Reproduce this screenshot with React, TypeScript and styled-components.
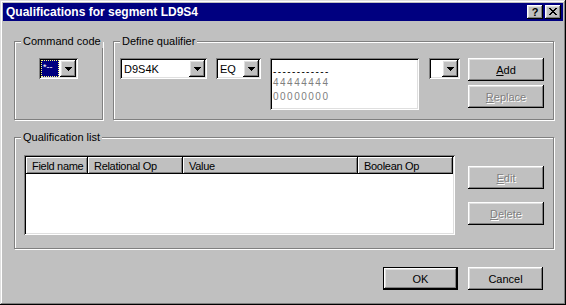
import React from "react";
import styled, { createGlobalStyle } from "styled-components";

const Global = createGlobalStyle`
  html, body { margin: 0; padding: 0; background: #c0c0c0; }
  body { font-family: "Liberation Sans", Arial, sans-serif; font-size: 11px; color: #000; }
  * { box-sizing: border-box; }
`;

const raised = `
  box-shadow: inset -1px -1px #000, inset 1px 1px #fff, inset -2px -2px #808080, inset 2px 2px #dfdfdf;
`;
const sunken = `
  box-shadow: inset 1px 1px #808080, inset -1px -1px #fff, inset 2px 2px #000, inset -2px -2px #dfdfdf;
`;

const Window = styled.div`
  width: 566px;
  height: 305px;
  background: #c0c0c0;
  padding: 3px;
  display: flex;
  flex-direction: column;
  box-shadow: inset -1px -1px #000, inset 1px 1px #dfdfdf, inset -2px -2px #808080, inset 2px 2px #fff;
`;

const TitleBar = styled.div`
  height: 18px;
  background: #000080;
  color: #fff;
  display: flex;
  align-items: center;
  padding-left: 3px;
  padding-right: 2px;
`;

const TitleText = styled.div`
  flex: 1;
  font-weight: bold;
  font-size: 12px;
  white-space: nowrap;
`;

const TitleButtons = styled.div`
  display: flex;
  gap: 2px;
`;

const TitleButton = styled.div`
  width: 16px;
  height: 14px;
  background: #c0c0c0;
  color: #000;
  ${raised}
  display: flex;
  align-items: center;
  justify-content: center;
  font-weight: bold;
  font-size: 11px;
  line-height: 14px;
  padding-bottom: 1px;
`;

const Content = styled.div`
  flex: 1;
  display: flex;
  flex-direction: column;
  padding: 20px 9px 0 11px;
`;

const Row = styled.div<{ $top?: number }>`
  display: flex;
  gap: 10px;
  margin-top: ${(p) => p.$top ?? 0}px;
`;

const Group = styled.div<{ $w: number; $h: number }>`
  position: relative;
  width: ${(p) => p.$w}px;
  height: ${(p) => p.$h}px;
  border: 1px solid #808080;
  box-shadow: inset 1px 1px #fff, 1px 1px #fff;
  display: flex;
  align-items: flex-start;
`;

const GroupLabel = styled.div`
  position: absolute;
  top: -7px;
  left: 6px;
  padding: 0 2px;
  background: #c0c0c0;
  line-height: 13px;
  white-space: nowrap;
`;

const Combo = styled.div<{ $w: number }>`
  width: ${(p) => p.$w}px;
  height: 21px;
  background: #fff;
  ${sunken}
  padding: 2px;
  display: flex;
  flex-shrink: 0;
`;

const ComboField = styled.div`
  flex: 1;
  display: flex;
  align-items: center;
  padding-left: 2px;
  overflow: hidden;
  white-space: nowrap;
`;

const SelectedField = styled.div`
  flex: 1;
  margin: 0 1px 0 0;
  background: #000080;
  border: 1px dotted #ffff80;
  color: #fff;
  font-size: 9px;
  line-height: 13px;
  padding-left: 1px;
  white-space: nowrap;
  overflow: hidden;
`;

const DropButton = styled.div`
  width: 16px;
  height: 17px;
  background: #c0c0c0;
  ${raised}
  display: flex;
  align-items: center;
  justify-content: center;
`;

const ListBox = styled.div`
  width: 149px;
  height: 52px;
  background: #fff;
  ${sunken}
  padding: 10px 3px 0 3px;
  flex-shrink: 0;
  overflow: hidden;
`;

const ListItem = styled.div<{ $sep?: boolean }>`
  font-size: 10px;
  letter-spacing: ${(p) => (p.$sep ? "1.4px" : "1.5px")};
  line-height: ${(p) => (p.$sep ? "8px" : "14px")};
  color: ${(p) => (p.$sep ? "#000" : "#808080")};
  white-space: nowrap;
`;

const ButtonCol = styled.div<{ $gap: number; $top: number }>`
  display: flex;
  flex-direction: column;
  gap: ${(p) => p.$gap}px;
  margin-top: ${(p) => p.$top}px;
  flex-shrink: 0;
`;

const Button = styled.div<{ $w?: number; $disabled?: boolean; $default?: boolean }>`
  width: ${(p) => p.$w ?? 76}px;
  height: 23px;
  background: #c0c0c0;
  display: flex;
  align-items: center;
  justify-content: center;
  padding-top: 1px;
  color: ${(p) => (p.$disabled ? "#808080" : "#000")};
  text-shadow: ${(p) => (p.$disabled ? "1px 1px 0 #fff" : "none")};
  ${(p) =>
    p.$default
      ? `border: 1px solid #000; box-shadow: inset -1px -1px #000, inset 1px 1px #fff, inset -2px -2px #808080, inset 2px 2px #dfdfdf;`
      : raised}
  u { text-decoration: underline; text-underline-offset: 1px; }
`;

const ListView = styled.div`
  width: 431px;
  height: 80px;
  background: #fff;
  ${sunken}
  padding: 2px;
  flex-shrink: 0;
`;

const Header = styled.div`
  display: flex;
  height: 17px;
`;

const HeaderCell = styled.div<{ $w: number }>`
  width: ${(p) => p.$w}px;
  height: 17px;
  background: #c0c0c0;
  box-shadow: inset -1px -1px #000, inset 1px 1px #fff, inset -2px -2px #808080;
  padding-left: 6px;
  display: flex;
  align-items: center;
  white-space: nowrap;
  letter-spacing: -0.3px;
  overflow: hidden;
`;

const Footer = styled.div`
  display: flex;
  justify-content: flex-end;
  gap: 10px;
  margin-top: 18px;
  margin-right: 11px;
`;

const Spacer = styled.div<{ $w: number }>`
  width: ${(p) => p.$w}px;
  flex-shrink: 0;
`;

const Inner = styled.div<{ $top: number; $left: number }>`
  display: flex;
  align-items: flex-start;
  padding-top: ${(p) => p.$top}px;
  padding-left: ${(p) => p.$left}px;
`;

const Arrow = () => (
  <svg width="7" height="4" viewBox="0 0 7 4">
    <path d="M0 0h7L3.5 4z" fill="#000" shapeRendering="crispEdges" />
  </svg>
);

const CloseIcon = () => (
  <svg width="8" height="7" viewBox="0 0 8 7">
    <path
      d="M0 0h2v1h1v1h2V1h1V0h2v1H7v1H6v1H5v1h1v1h1v1h1v1H6V6H5V5H3v1H2v1H0V6h1V5h1V4h1V3H2V2H1V1H0z"
      fill="#000"
      shapeRendering="crispEdges"
    />
  </svg>
);

const ComboBox = ({ w, value, selected }: { w: number; value?: string; selected?: boolean }) => (
  <Combo $w={w}>
    {selected ? <SelectedField>{value}</SelectedField> : <ComboField>{value}</ComboField>}
    <DropButton>
      <Arrow />
    </DropButton>
  </Combo>
);

export default function App() {
  return (
    <>
      <Global />
      <Window>
        <TitleBar>
          <TitleText>Qualifications for segment LD9S4</TitleText>
          <TitleButtons>
            <TitleButton>?</TitleButton>
            <TitleButton>
              <CloseIcon />
            </TitleButton>
          </TitleButtons>
        </TitleBar>
        <Content>
          <Row>
            <Group $w={89} $h={79}>
              <GroupLabel>Command code</GroupLabel>
              <Inner $top={16} $left={24}>
                <ComboBox w={39} value="*--" selected />
              </Inner>
            </Group>
            <Group $w={441} $h={79}>
              <GroupLabel>Define qualifier</GroupLabel>
              <Inner $top={16} $left={6}>
                <ComboBox w={87} value="D9S4K" />
                <Spacer $w={9} />
                <ComboBox w={45} value="EQ" />
                <Spacer $w={9} />
                <ListBox>
                  <ListItem $sep>------------</ListItem>
                  <ListItem>44444444</ListItem>
                  <ListItem>00000000</ListItem>
                </ListBox>
                <Spacer $w={10} />
                <ComboBox w={31} />
                <Spacer $w={8} />
                <ButtonCol $gap={4} $top={0}>
                  <Button>
                    <span>
                      <u>A</u>dd
                    </span>
                  </Button>
                  <Button $disabled>
                    <span>
                      <u>R</u>eplace
                    </span>
                  </Button>
                </ButtonCol>
              </Inner>
            </Group>
          </Row>
          <Row $top={17}>
            <Group $w={540} $h={112}>
              <GroupLabel>Qualification list</GroupLabel>
              <Inner $top={17} $left={9}>
                <ListView>
                  <Header>
                    <HeaderCell $w={62}>Field name</HeaderCell>
                    <HeaderCell $w={95}>Relational Op</HeaderCell>
                    <HeaderCell $w={175}>Value</HeaderCell>
                    <HeaderCell $w={95}>Boolean Op</HeaderCell>
                  </Header>
                </ListView>
                <Spacer $w={13} />
                <ButtonCol $gap={13} $top={11}>
                  <Button $disabled>
                    <span>
                      <u>E</u>dit
                    </span>
                  </Button>
                  <Button $disabled>
                    <span>
                      <u>D</u>elete
                    </span>
                  </Button>
                </ButtonCol>
              </Inner>
            </Group>
          </Row>
          <Footer>
            <Button $w={75} $default>
              OK
            </Button>
            <Button $w={75}>Cancel</Button>
          </Footer>
        </Content>
      </Window>
    </>
  );
}
